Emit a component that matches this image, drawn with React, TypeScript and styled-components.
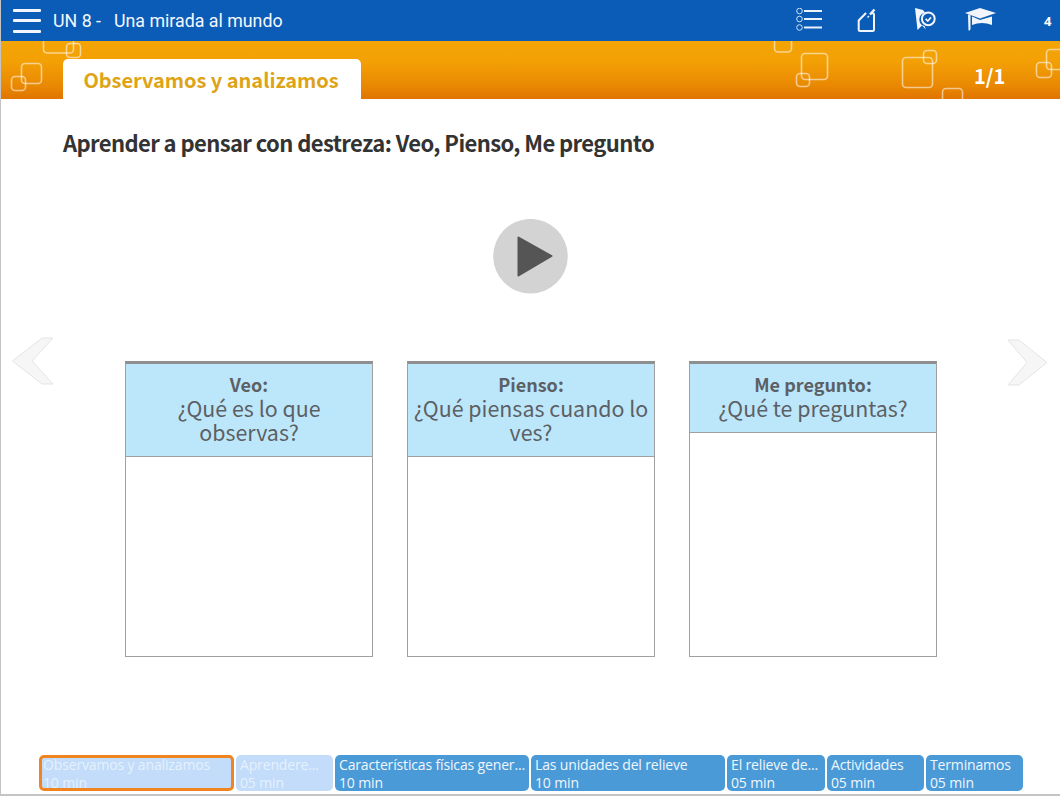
import React from "react";
import styled, { createGlobalStyle } from "styled-components";

const Global = createGlobalStyle`
  html, body { margin: 0; padding: 0; background: #fff; }
  #root { width: 1060px; height: 796px; overflow: hidden; }
`;
const CJK = `"Noto Sans CJK SC", "Noto Sans", sans-serif`;

const Page = styled.div`
  width: 1060px; height: 796px; display: flex; flex-direction: column;
  background: #fff; box-sizing: border-box; border-left: 1px solid #c4c4c4; border-bottom: 2px solid #c4c4c4; overflow: hidden;
`;
const TopBar = styled.header`
  height: 41px; flex: none; background: #0b5cb7; display: flex; align-items: center; color: #fff;
`;
const Burger = styled.div`
  width: 28px; margin-left: 12px; display: flex; flex-direction: column; gap: 7.5px;
  span { display: block; height: 3px; background: #f2f6fc; border-radius: 1px; }
`;
const Title = styled.div`
  margin-left: 12px; font: 400 17.8px/20px Roboto, sans-serif; white-space: pre; color: #f4f8fd; flex: 1;
  span { margin-left: 13px; }
`;
const IconSlot = styled.div<{ $w: number; $gap?: number }>`
  width: ${(p) => p.$w}px; margin-left: ${(p) => p.$gap ?? 0}px; height: 25px; flex: none;
  svg { display: block; }
`;
const Count = styled.div`
  width: 16px; margin-left: 47px; flex: none; font: 700 13px/16px "Open Sans", sans-serif; color: #fff;
`;
const Band = styled.div`
  height: 58px; flex: none; position: relative; overflow: hidden;
  background: linear-gradient(#f4a506 0%, #f3a005 35%, #ea8a03 75%, #e07400 100%);
  display: flex; align-items: flex-end;
`;
const Deco = styled.svg`
  position: absolute; left: -1px; top: 0; width: 1060px; height: 58px; pointer-events: none;
`;
const Tab = styled.div`
  position: relative; margin-left: 62px; width: 298px; height: 40px; box-sizing: border-box; padding-right: 2px; background: #fff; border-radius: 5px 5px 0 0;
  font: 700 20px/41px ${CJK}; letter-spacing: -0.03px; color: #dea316; text-align: center;
`;
const PageNo = styled.div`
  position: absolute; left: 973px; top: 22px; font: 700 20px/26px ${CJK}; color: #fff;
`;
const Content = styled.main`
  flex: 1; position: relative; display: flex; flex-direction: column; min-height: 0;
`;
const Heading = styled.h1`
  margin: 28px 0 0 62px; font: 700 22px/30px ${CJK}; letter-spacing: -0.6px; color: #333;
`;
const PlayWrap = styled.div`
  margin: 62px 0 0 492px; width: 75px; height: 75px;
`;
const Columns = styled.div`
  margin: 67px 0 0 124px; display: flex; gap: 34px; align-items: flex-start;
`;
const Column = styled.section`
  width: 248px; height: 296px; box-sizing: border-box; border: 1px solid #a0a0a0; border-top: 3px solid #8f8f8f; display: flex; flex-direction: column;
`;
const ColumnHead = styled.div`
  background: #bce7fb; border-bottom: 1px solid #a0a0a0; padding: 8px 2px 12px; text-align: center; color: #5c6064;
  font: 400 21.4px/24px ${CJK};
  strong { display: block; font: 700 18px/24px ${CJK}; }
`;
const Arrow = styled.svg<{ $left: number }>`
  position: absolute; top: 237px; left: ${(p) => p.$left}px; width: 44px; height: 52px;
  filter: blur(0.5px);
`;
const Timeline = styled.nav`
  position: absolute; left: 38px; bottom: 3px; display: flex; gap: 2px;
`;
const Step = styled.div<{ $w: number; $done?: boolean; $active?: boolean }>`
  width: ${(p) => p.$w}px; height: 36px; box-sizing: border-box; border-radius: 5px; overflow: hidden;
  background: ${(p) => (p.$done ? "#c2dcfa" : "#4b9ad8")};
  color: ${(p) => (p.$done ? "#e6f1fd" : "#f0f7fc")};
  padding: ${(p) => (p.$active ? "0 0 0 1px" : "1px 0 0 4px")};
  border: ${(p) => (p.$active ? "3px solid #ef8420" : "0")};
  font: 400 14px/18px "Open Sans", sans-serif; white-space: nowrap;
  ${(p) => (p.$active ? "& > :first-child { margin-top: -2px; }" : "")}
`;
const Line = styled.div`
  overflow: hidden; text-overflow: ellipsis; letter-spacing: -0.15px;
`;

const Sq = ({ x, y, w, h = w, o = 0.55 }: { x: number; y: number; w: number; h?: number; o?: number }) => (
  <rect x={x} y={y} width={w} height={h} rx={3.5} fill="none" stroke="#fff" strokeOpacity={o} strokeWidth={1.6} />
);

const steps = [
  { t: "Observamos y analizamos", m: "10 min", w: 195, done: true, active: true },
  { t: "Aprendere...", m: "05 min", w: 97, done: true },
  { t: "Características físicas gener...", m: "10 min", w: 194 },
  { t: "Las unidades del relieve", m: "10 min", w: 194 },
  { t: "El relieve de...", m: "05 min", w: 98 },
  { t: "Actividades", m: "05 min", w: 97 },
  { t: "Terminamos", m: "05 min", w: 97 },
];

export default function App() {
  return (
    <Page>
      <Global />
      <TopBar>
        <Burger><span /><span /><span /></Burger>
        <Title>UN 8 -<span>Una mirada al mundo</span></Title>
        <IconSlot $w={28}>
          <svg width="28" height="25" viewBox="0 0 28 25" fill="none" stroke="#eaf2fb">
            <circle cx="3.5" cy="3" r="2.8" strokeWidth="1" stroke="#cfe0f5" />
            <circle cx="3.5" cy="11" r="2.8" strokeWidth="1" stroke="#cfe0f5" />
            <circle cx="3.5" cy="19.5" r="2.8" strokeWidth="1" stroke="#cfe0f5" />
            <path d="M8 3h18M8 11h18M8 19.5h18" strokeWidth="2" />
          </svg>
        </IconSlot>
        <IconSlot $w={20} $gap={33}>
          <svg width="20" height="25" viewBox="0 0 20 25" fill="none" stroke="#f2f6fc" strokeWidth="2">
            <path d="M9 5L1.7 12.5V21.5Q1.7 23 3.2 23H15.5Q17 23 17 21.5V6.5Q17 5.2 15.7 5.2H14.5" strokeLinejoin="round" />
            <path d="M10.5 9.5L12 8" strokeWidth="1.4" />
            <path d="M13 6.5L17.5 1.5" strokeWidth="2.4" />
          </svg>
        </IconSlot>
        <IconSlot $w={24} $gap={36}>
          <svg width="24" height="25" viewBox="0 0 24 25">
            <path d="M2 0L10 2L12 4.5Q6.5 6 6.3 11.5Q6.5 17 11.5 18L13 21.5L9 17.5L4.5 22Z" fill="#f2f6fc" />
            <circle cx="15.3" cy="10.8" r="6.4" fill="none" stroke="#f2f6fc" strokeWidth="2" />
            <path d="M12.6 10.8l2.2 2.2 3.2-3.6" fill="none" stroke="#f2f6fc" strokeWidth="1.7" />
          </svg>
        </IconSlot>
        <IconSlot $w={32} $gap={28}>
          <svg width="32" height="25" viewBox="0 0 32 25" fill="#f2f6fc">
            <path d="M15 0L31 5L15 10.5L0 5Z" />
            <path d="M7 8.5L15 12L27 8.5V17Q17 13 7 17Z" />
            <path d="M3 6.5L5.5 7V21Q5 23 3.5 22.5Z" />
          </svg>
        </IconSlot>
        <Count>4</Count>
      </TopBar>
      <Band>
        <Deco viewBox="0 0 1060 58">
          <Sq x={43.5} y={-6} w={30} h={18} /><Sq x={66.5} y={2.5} w={14} />
          <Sq x={21.5} y={22.5} w={20} /><Sq x={11.5} y={35.5} w={14} />
          <Sq x={774.5} y={-6} w={17} h={17} /><Sq x={801.5} y={12.5} w={26} /><Sq x={796.5} y={32.5} w={13} />
          <Sq x={902.5} y={16.5} w={30} /><Sq x={923.5} y={9.5} w={13} /><Sq x={942.5} y={47.5} w={20} />
          <Sq x={1046.5} y={8.5} w={22} h={20} /><Sq x={1036.5} y={21.5} w={15} />
        </Deco>
        <Tab>Observamos y analizamos</Tab>
        <PageNo>1/1</PageNo>
      </Band>
      <Content>
        <Heading>Aprender a pensar con destreza: Veo, Pienso, Me pregunto</Heading>
        <PlayWrap>
          <svg width="75" height="75" viewBox="0 0 75 75">
            <circle cx="37.5" cy="37.2" r="37.3" fill="#d3d3d3" />
            <path d="M25.5 18.5L58.5 37 25.5 56.5Z" fill="#555" stroke="#555" strokeWidth="2" strokeLinejoin="round" />
          </svg>
        </PlayWrap>
        <Columns>
          <Column><ColumnHead><strong>Veo:</strong>¿Qué es lo que observas?</ColumnHead></Column>
          <Column><ColumnHead><strong>Pienso:</strong>¿Qué piensas cuando lo ves?</ColumnHead></Column>
          <Column><ColumnHead><strong>Me pregunto:</strong>¿Qué te preguntas?</ColumnHead></Column>
        </Columns>
        <Arrow $left={9} viewBox="0 0 44 52">
          <path d="M32 2H43L22 25L43 48H32L2.5 25Z" fill="#f6f6f6" stroke="#e4e4e4" strokeWidth="1" />
        </Arrow>
        <Arrow $left={1004} viewBox="0 0 44 52">
          <path d="M3 4H14L42 26.5L14 49H3L22 26.5Z" fill="#f6f6f6" stroke="#e4e4e4" strokeWidth="1" />
        </Arrow>
        <Timeline>
          {steps.map((s) => (
            <Step key={s.t} $w={s.w} $done={s.done} $active={s.active}>
              <Line>{s.t}</Line>
              <Line>{s.m}</Line>
            </Step>
          ))}
        </Timeline>
      </Content>
    </Page>
  );
}
